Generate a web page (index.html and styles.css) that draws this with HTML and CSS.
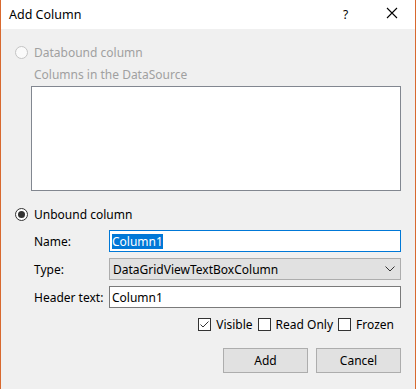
FILE: index.html
```html
<!DOCTYPE html>
<html>
<head>
<meta charset="utf-8">
<link rel="stylesheet" href="styles.css">
</head>
<body>
<div class="window">
  <div class="titlebar">
    <span class="title">Add Column</span>
    <span class="help">?</span>
    <svg class="close" width="12" height="12" viewBox="0 0 12 12"><path d="M1 1 L11 11 M11 1 L1 11" stroke="#000" stroke-width="1.1" fill="none"/></svg>
  </div>
  <div class="content">
    <div class="radio-row disabled">
      <span class="radio"></span>
      <span>Databound column</span>
    </div>
    <div class="sublabel disabled">Columns in the DataSource</div>
    <div class="listbox"></div>
    <div class="radio-row">
      <span class="radio checked"><span class="dot"></span></span>
      <span>Unbound column</span>
    </div>
    <div class="field-row first">
      <span class="label">Name:</span>
      <div class="textbox focused"><span class="sel">Column1</span></div>
    </div>
    <div class="field-row">
      <span class="label">Type:</span>
      <div class="combo"><span>DataGridViewTextBoxColumn</span>
        <svg class="chev" width="10" height="6" viewBox="0 0 10 6"><path d="M0.5 0.5 L5 5 L9.5 0.5" stroke="#333" stroke-width="1" fill="none"/></svg>
      </div>
    </div>
    <div class="field-row">
      <span class="label">Header text:</span>
      <div class="textbox"><span>Column1</span></div>
    </div>
    <div class="checks">
      <span class="check checked"><svg width="11" height="11" viewBox="0 0 11 11"><path d="M1.5 5.5 L4 8 L9.5 2.5" stroke="#333" stroke-width="1" fill="none"/></svg></span>
      <span class="ctext">Visible</span>
      <span class="check"></span>
      <span class="ctext">Read Only</span>
      <span class="check"></span>
      <span class="ctext">Frozen</span>
    </div>
    <div class="buttons">
      <div class="btn">Add</div>
      <div class="btn">Cancel</div>
    </div>
  </div>
</div>
</body>
</html>
```
FILE: styles.css
```css
html, body {
  margin: 0;
  padding: 0;
  background: #f0f0f0;
}
.window {
  width: 414px;
  height: 389px;
  border-left: 1px solid #d8692f;
  border-right: 1px solid #d8692f;
  background: #f0f0f0;
  font-family: "Noto Sans", "Open Sans", sans-serif;
  font-size: 12px;
  color: #000;
  overflow: hidden;
}
.titlebar {
  height: 29px;
  background: #fff;
  display: flex;
  align-items: center;
  position: relative;
}
.title {
  margin-left: 8px;
  font-size: 12.5px;
}
.help {
  position: absolute;
  left: 342px;
  top: 6px;
  font-size: 12px;
}
.close {
  position: absolute;
  left: 385px;
  top: 7px;
}
.content {
  padding: 15px 14px 0 14px;
  display: flex;
  flex-direction: column;
}
.disabled {
  color: #a0a0a0;
}
.radio-row {
  height: 16px;
  display: flex;
  align-items: center;
}
.radio {
  width: 11px;
  height: 11px;
  border: 1px solid #333;
  border-radius: 50%;
  background: #fff;
  margin-right: 6px;
  display: flex;
  align-items: center;
  justify-content: center;
}
.disabled .radio {
  border-color: #c4c4c4;
  background: #fafafa;
}
.dot {
  width: 7px;
  height: 7px;
  border-radius: 50%;
  background: #333;
}
.sublabel {
  height: 16px;
  line-height: 16px;
  margin-top: 7px;
  padding-left: 19px;
}
.listbox {
  margin-top: 3px;
  margin-left: 16px;
  height: 103px;
  border: 1px solid #828790;
  background: #fff;
}
.radio-row + .field-row, .field-row.first {
  margin-top: 8px;
}
.listbox + .radio-row {
  margin-top: 15px;
}
.field-row {
  display: flex;
  align-items: center;
  height: 22px;
  margin-top: 6px;
}
.label {
  width: 75px;
  padding-left: 19px;
  flex-shrink: 0;
}
.textbox {
  flex: 1;
  height: 20px;
  border: 1px solid #7a7a7a;
  background: #fff;
  display: flex;
  align-items: center;
  padding-left: 2px;
}
.textbox.focused {
  border-color: #0078d7;
}
.sel {
  background: #0078d7;
  color: #fff;
  line-height: 15px;
}
.combo {
  flex: 1;
  height: 20px;
  border: 1px solid #adadad;
  background: #e1e1e1;
  display: flex;
  align-items: center;
  justify-content: space-between;
  padding-left: 3px;
  padding-right: 5px;
}
.checks {
  margin-top: 8px;
  height: 16px;
  display: flex;
  align-items: center;
  justify-content: flex-end;
  padding-right: 7px;
}
.check {
  width: 11px;
  height: 11px;
  border: 1px solid #333;
  background: #fff;
  display: flex;
  align-items: center;
  justify-content: center;
}
.check.checked svg {
  display: block;
}
.ctext {
  margin-left: 5px;
  margin-right: 5px;
}
.ctext:last-child {
  margin-right: 0;
}
.buttons {
  margin-top: 16px;
  display: flex;
  justify-content: flex-end;
  gap: 8px;
}
.btn {
  width: 83px;
  height: 23px;
  border: 1px solid #adadad;
  background: #e1e1e1;
  display: flex;
  align-items: center;
  justify-content: center;
}
```
